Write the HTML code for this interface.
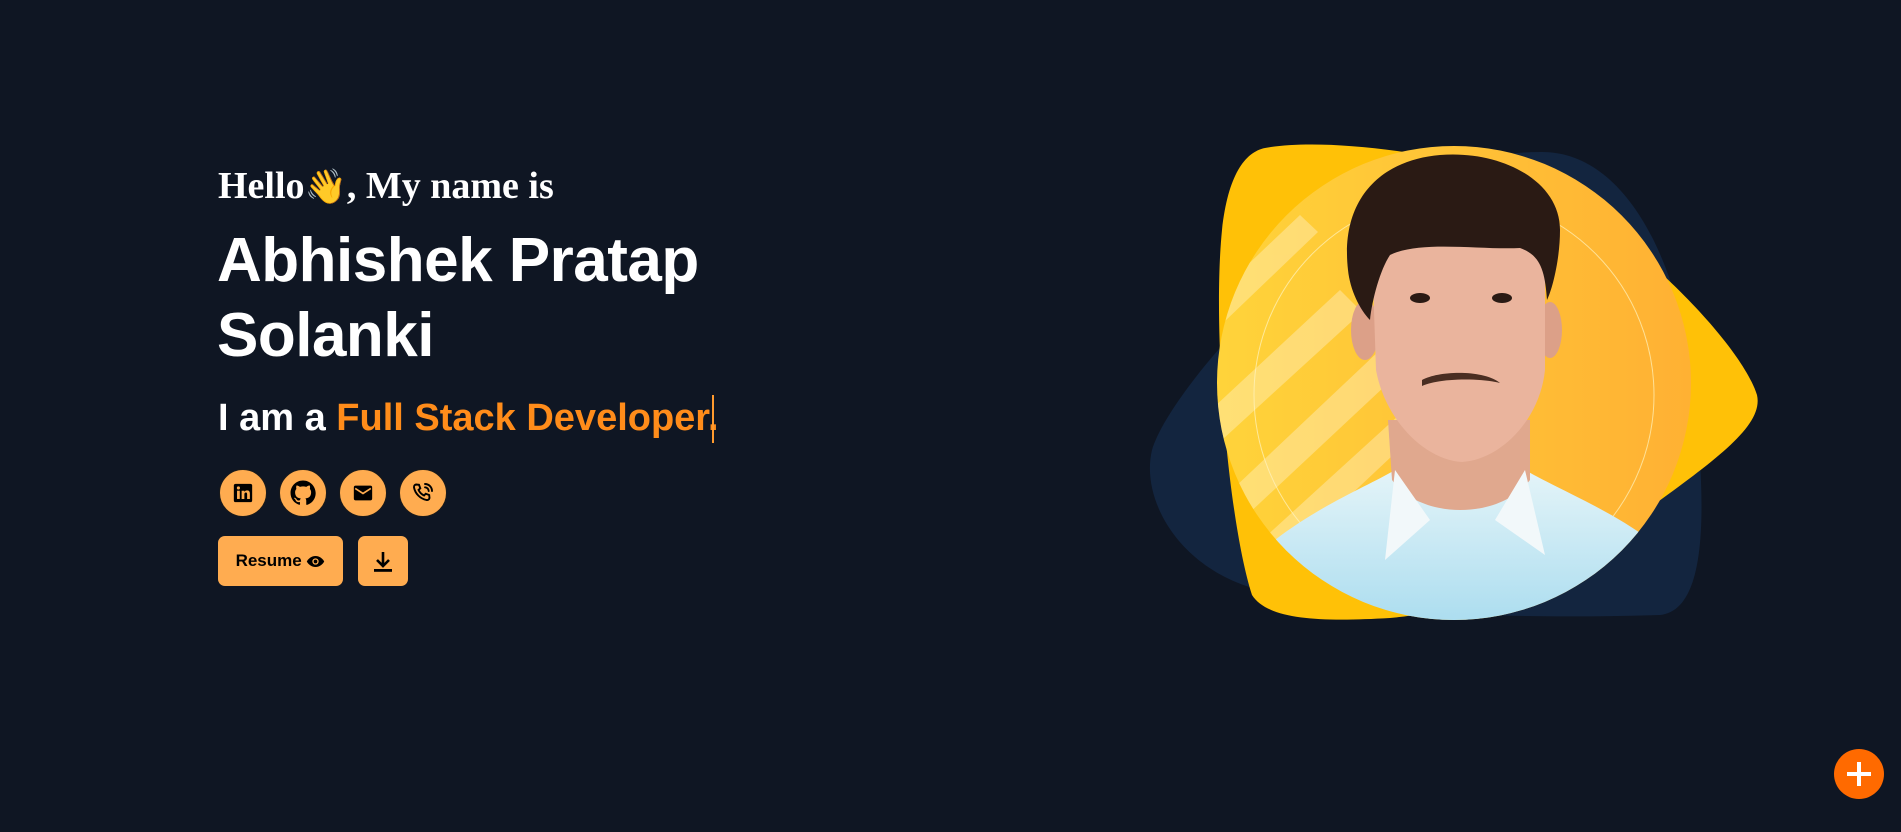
<!DOCTYPE html>
<html><head><meta charset="utf-8">
<style>
*{margin:0;padding:0;box-sizing:border-box}
html,body{width:1901px;height:832px;overflow:hidden;background:#0f1623}
.hello{position:absolute;left:218px;top:164px;font:bold 38px "Liberation Serif",serif;color:#fff;white-space:nowrap}
.name{position:absolute;left:217px;top:223px;font:bold 62px/75px "Liberation Sans",sans-serif;color:#fff;letter-spacing:-0.5px}
.tag{position:absolute;left:218px;top:397px;font:bold 38px "Liberation Sans",sans-serif;color:#fff;white-space:nowrap}
.tag span{color:#ff8c1a}
.cur{position:absolute;left:712px;top:395px;width:2px;height:48px;background:#ff9a2e}
.ic{position:absolute;top:469px;width:48px;height:48px;border-radius:50%;background:#ffac50;border:1px solid #1a1a1a;display:flex;align-items:center;justify-content:center}
.btn{position:absolute;top:536px;height:50px;border-radius:7px;background:#ffac50;display:flex;align-items:center;justify-content:center;font:bold 17px "Liberation Sans",sans-serif;color:#000}
.plus{position:absolute;left:1834px;top:749px;width:50px;height:50px;border-radius:50%;background:#ff6a00}
.plus:before{content:"";position:absolute;left:13px;top:23px;width:24px;height:4px;background:#fff}
.plus:after{content:"";position:absolute;left:23px;top:13px;width:4px;height:24px;background:#fff}
</style></head><body>
<div class="hello">Hello<span style="font-family:'Noto Color Emoji','DejaVu Sans',sans-serif;font-size:34px">👋</span>, My name is</div>
<div class="name">Abhishek Pratap<br>Solanki</div>
<div class="tag">I am a <span>Full Stack Developer.</span></div>
<div class="cur"></div>

<div class="ic" style="left:219px"><svg width="22" height="22" viewBox="0 0 24 24"><rect x="2" y="2" width="20" height="20" rx="2" fill="#000"/><rect x="5.5" y="9.5" width="3" height="9" fill="#ffac50"/><circle cx="7" cy="6.5" r="1.7" fill="#ffac50"/><path d="M10.5 9.5h3v1.3c.6-1 1.7-1.6 3-1.6 2.3 0 3 1.5 3 3.8v5.5h-3v-5c0-1.2-.3-2-1.4-2s-1.6.8-1.6 2v5h-3z" fill="#ffac50"/></svg></div>
<div class="ic" style="left:279px"><svg width="26" height="26" viewBox="0 0 24 24"><path fill="#000" d="M12 .5C5.6.5.5 5.6.5 12c0 5.1 3.3 9.4 7.9 10.9.6.1.8-.2.8-.6v-2c-3.2.7-3.900-1.5-3.9-1.5-.5-1.3-1.3-1.7-1.3-1.7-1-.7.1-.7.1-.7 1.2.1 1.8 1.2 1.8 1.2 1 1.8 2.7 1.3 3.4 1 .1-.8.4-1.3.7-1.6-2.6-.3-5.3-1.3-5.300-5.7 0-1.3.5-2.3 1.2-3.1-.1-.3-.5-1.5.1-3.1 0 0 1-.3 3.2 1.2a11 11 0 0 1 5.8 0c2.2-1.5 3.2-1.2 3.2-1.2.6 1.6.2 2.8.1 3.1.7.8 1.2 1.9 1.2 3.1 0 4.4-2.7 5.4-5.3 5.7.4.4.8 1.1.8 2.2v3.2c0 .3.2.7.8.6 4.6-1.5 7.9-5.8 7.9-10.9C23.5 5.6 18.4.5 12 .5z"/></svg></div>
<div class="ic" style="left:339px"><svg width="22" height="22" viewBox="0 0 24 24"><rect x="2" y="4" width="20" height="16" rx="2" fill="#000"/><path d="M3.5 7l8.5 5.5L20.5 7" fill="none" stroke="#ffac50" stroke-width="1.8"/></svg></div>
<div class="ic" style="left:399px"><svg width="24" height="24" viewBox="0 0 24 24" fill="none" stroke="#000" stroke-width="1.9" stroke-linecap="round"><path d="M5 3.5l3 .3 1.3 3.5-1.8 1.6a11 11 0 0 0 5.6 5.6l1.6-1.8 3.5 1.3.3 3c-.2 1.4-1.5 2.2-3 2A16 16 0 0 1 3 6.5C2.8 5 3.6 3.7 5 3.5z"/><path d="M14 3a7 7 0 0 1 7 7M14 6.3a3.8 3.8 0 0 1 3.7 3.7"/></svg></div>

<div class="btn" style="left:218px;width:125px">Resume&nbsp;<svg width="19" height="13" viewBox="0 0 24 16"><path d="M12 1C6.5 1 2.5 5 1 8c1.5 3 5.5 7 11 7s9.5-4 11-7c-1.5-3-5.5-7-11-7z" fill="#000"/><circle cx="12" cy="8" r="4" fill="#ffac50"/><circle cx="12" cy="8" r="2.3" fill="#000"/></svg></div>
<div class="btn" style="left:358px;width:50px"><svg width="22" height="24" viewBox="0 0 22 24"><path d="M11 3v13M5 11l6 6 6-6" fill="none" stroke="#000" stroke-width="2.6"/><rect x="2" y="20" width="18" height="2.8" fill="#000"/></svg></div>

<svg style="position:absolute;left:0;top:0" width="1901" height="832">
<defs>
<clipPath id="cc"><circle cx="1454" cy="383" r="237"/></clipPath>
<linearGradient id="bg" x1="0" y1="0" x2="1" y2="0"><stop offset="0" stop-color="#ffd43a"/><stop offset="1" stop-color="#ffb033"/></linearGradient>
<linearGradient id="sh" x1="0" y1="0" x2="0" y2="1"><stop offset="0" stop-color="#e4f4f8"/><stop offset="1" stop-color="#a9dcef"/></linearGradient>
</defs>
<path d="M1540,152 C1620,150 1680,250 1695,400 C1705,500 1710,610 1660,615 C1500,620 1350,612 1260,590 C1180,570 1140,500 1152,450 C1170,390 1300,250 1400,190 C1460,160 1500,152 1540,152Z" fill="#13253f"/>
<path d="M1265,148 C1320,138 1420,150 1520,175 C1620,220 1740,340 1757,395 C1765,430 1700,470 1620,530 C1560,575 1460,612 1390,618 C1320,622 1268,620 1252,595 C1228,520 1212,330 1222,230 C1228,175 1245,152 1265,148Z" fill="#ffc107"/>
<g clip-path="url(#cc)">
<rect x="1210" y="140" width="490" height="490" fill="url(#bg)"/>
<g fill="#fff" opacity="0.3">
<path d="M1200,310 L1300,215 L1318,232 L1200,345Z"/>
<path d="M1200,420 L1340,290 L1362,312 L1200,460Z"/>
<path d="M1200,520 L1380,350 L1400,372 L1215,545Z"/>
<path d="M1240,560 L1410,405 L1425,425 L1260,580Z"/>
</g>
<circle cx="1454" cy="395" r="200" fill="none" stroke="#fff3c0" stroke-width="1" opacity="0.7"/>
<path d="M1270,630 L1275,540 C1320,505 1370,485 1395,470 L1525,470 C1560,490 1610,510 1650,540 L1660,630Z" fill="url(#sh)"/>
<path d="M1388,420 L1392,480 C1420,520 1500,520 1530,480 L1530,420Z" fill="#e0a88e"/>
<path d="M1395,470 L1385,560 L1430,520Z M1525,470 L1545,555 L1495,520Z" fill="#f2f8fa"/>
<ellipse cx="1365" cy="330" rx="14" ry="30" fill="#dca088"/>
<ellipse cx="1550" cy="330" rx="12" ry="28" fill="#dca088"/>
<path d="M1372,250 C1372,220 1540,215 1545,255 L1545,370 C1540,420 1500,460 1462,462 C1425,460 1385,420 1376,370Z" fill="#eab49d"/>
<path d="M1348,270 C1340,200 1380,160 1440,155 C1500,150 1560,180 1560,230 C1560,260 1552,290 1547,300 C1545,270 1540,255 1520,248 C1480,250 1420,240 1390,255 C1380,270 1372,300 1370,320 C1360,310 1350,290 1348,270Z" fill="#2a1a14"/>
<path d="M1422,380 C1440,370 1485,370 1500,383 C1480,378 1440,378 1422,386Z" fill="#4a2e22"/>
<ellipse cx="1420" cy="298" rx="10" ry="5" fill="#2a1a14"/><ellipse cx="1502" cy="298" rx="10" ry="5" fill="#2a1a14"/>
</g>
</svg>
<div class="plus"></div>
</body></html>
